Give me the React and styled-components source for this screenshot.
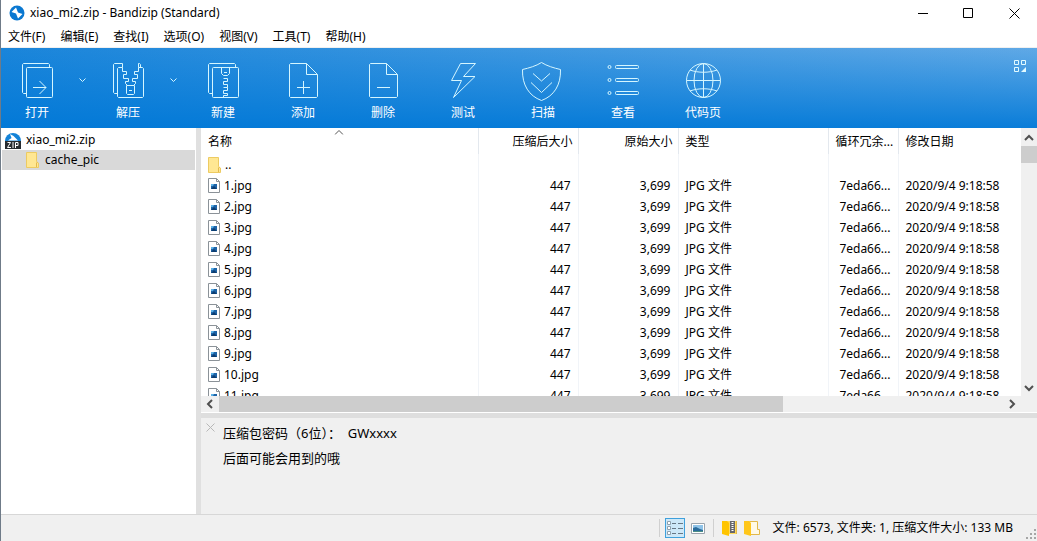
import React from 'react';
import styled, { createGlobalStyle } from 'styled-components';

const menus = ['文件(F)', '编辑(E)', '查找(I)', '选项(O)', '视图(V)', '工具(T)', '帮助(H)'];
const files = Array.from({ length: 11 }, (_, i) => `${i + 1}.jpg`);

const App = () => {
  return (
    <>
      <GlobalStyle />
      <Window>
        <TitleBar>
          <LogoIcon />
          <h1>xiao_mi2.zip - Bandizip (Standard)</h1>
          <WindowButton aria-label="最小化">
            <svg width="11" height="11" viewBox="0 0 11 11">
              <path d="M1 5.5H11" />
            </svg>
          </WindowButton>
          <WindowButton aria-label="最大化">
            <svg width="11" height="11" viewBox="0 0 11 11">
              <path d="M.5 .5H9.5V9.5H.5Z" />
            </svg>
          </WindowButton>
          <WindowButton aria-label="关闭">
            <svg width="11" height="11" viewBox="0 0 11 11">
              <path d="M.5 .5L10.5 10.5M10.5 .5L.5 10.5" />
            </svg>
          </WindowButton>
        </TitleBar>
        <MenuBar>
          {menus.map((menu) => (
            <MenuButton key={menu}>{menu}</MenuButton>
          ))}
        </MenuBar>
        <Toolbar>
          {tools.map(({ label, icon, width, menu }) => (
            <React.Fragment key={label}>
              <ToolButton $width={width}>
                <svg width="40" height="40" viewBox="0 0 40 40">
                  {icon}
                </svg>
                {label}
              </ToolButton>
              {menu && (
                <ToolArrow aria-label={`${label}菜单`}>
                  <svg width="7" height="4" viewBox="0 0 7 4">
                    <path d="M.5 .5L3.5 3.5L6.5 .5" />
                  </svg>
                </ToolArrow>
              )}
            </React.Fragment>
          ))}
          <LayoutButton aria-label="布局">
            <svg width="13" height="13" viewBox="0 0 13 13">
              <path d="M.5 .5H4.5V4.5H.5ZM7.5 .5H11.5V4.5H7.5ZM.5 7.5H4.5V11.5H.5Z" />
              <path d="M12 7V12H7Z" fill="#e3fbff" stroke="none" />
            </svg>
          </LayoutButton>
        </Toolbar>
        <Body>
          <Tree>
            <TreeItem>
              <ZipIcon />
              xiao_mi2.zip
            </TreeItem>
            <TreeItem $selected $nested>
              <FolderIcon />
              cache_pic
            </TreeItem>
          </Tree>
          <Content>
            <ListPane>
              <ListView>
                <FileTable>
                  <colgroup>
                    <Col $width={277} />
                    <Col $width={100} />
                    <Col $width={100} />
                    <Col $width={150} />
                    <Col $width={70} />
                    <Col />
                  </colgroup>
                  <thead>
                    <tr>
                      <HeadCell>
                        名称
                        <SortMark width="9" height="5" viewBox="0 0 9 5">
                          <path d="M.5 4.5L4.5 .5L8.5 4.5" />
                        </SortMark>
                      </HeadCell>
                      <HeadCell $right>压缩后大小</HeadCell>
                      <HeadCell $right>原始大小</HeadCell>
                      <HeadCell>类型</HeadCell>
                      <HeadCell>循环冗余...</HeadCell>
                      <HeadCell>修改日期</HeadCell>
                    </tr>
                  </thead>
                  <tbody>
                    <tr>
                      <Cell>
                        <FileName>
                          <FolderIcon />
                          ..
                        </FileName>
                      </Cell>
                      <Cell />
                      <Cell />
                      <Cell />
                      <Cell />
                      <Cell />
                    </tr>
                    {files.map((name) => (
                      <tr key={name}>
                        <Cell>
                          <FileName>
                            <ImageIcon />
                            {name}
                          </FileName>
                        </Cell>
                        <Cell $right>447</Cell>
                        <Cell $right>3,699</Cell>
                        <Cell>JPG 文件</Cell>
                        <Cell $right>7eda66...</Cell>
                        <Cell>2020/9/4 9:18:58</Cell>
                      </tr>
                    ))}
                  </tbody>
                </FileTable>
              </ListView>
              <ScrollBar $vertical>
                <ScrollButton $vertical aria-label="向上滚动">
                  <Chevron d="M1 8L5 4L9 8" />
                </ScrollButton>
                <ScrollTrack $vertical>
                  <ScrollThumb $vertical />
                </ScrollTrack>
                <ScrollButton $vertical aria-label="向下滚动">
                  <Chevron d="M1 4L5 8L9 4" />
                </ScrollButton>
              </ScrollBar>
              <ScrollBar>
                <ScrollButton aria-label="向左滚动">
                  <Chevron d="M7 1L3 5L7 9" />
                </ScrollButton>
                <ScrollTrack>
                  <ScrollThumb />
                </ScrollTrack>
                <ScrollButton aria-label="向右滚动">
                  <Chevron d="M3 1L7 5L3 9" />
                </ScrollButton>
              </ScrollBar>
              <ScrollCorner />
            </ListPane>
            <Comment>
              <CloseButton aria-label="关闭注释">
                <svg width="9" height="9" viewBox="0 0 9 9">
                  <path d="M.5 .5L8.5 8.5M8.5 .5L.5 8.5" />
                </svg>
              </CloseButton>
              <div>
                <p>压缩包密码（6位）：&nbsp; GWxxxx</p>
                <p>后面可能会用到的哦</p>
              </div>
            </Comment>
          </Content>
        </Body>
        <StatusBar>
          <Separator />
          <ViewButton $active aria-label="详细信息">
            <svg width="16" height="14" viewBox="0 0 16 14">
              <path d="M.5 .5H3.5V3.5H.5ZM.5 5.5H3.5V8.5H.5ZM.5 10.5H3.5V13.5H.5Z" fill="#fff" stroke="#8fa0ad" />
              <path d="M5 2.500H9M11 2.500H16M5 7.500H9M11 7.500H16M5 12.500H9M11 12.500H16" stroke="#667785" />
            </svg>
          </ViewButton>
          <ViewButton aria-label="大图标">
            <svg width="14" height="11" viewBox="0 0 14 11">
              <path d="M.5 .5H13.5V10.5H.5Z" fill="#fff" stroke="#9aa4ad" />
              <path d="M2 2H12V9H2Z" fill="#8fc3e8" />
              <path d="M2 5L5 4L9 6L12 7V9H2Z" fill="#2a6c9c" />
              <path d="M2 8H12V9H2Z" fill="#4e8f86" />
            </svg>
          </ViewButton>
          <Separator />
          <ViewButton aria-label="压缩文件">
            <svg width="16" height="16" viewBox="0 0 16 16">
              <path d="M1 1H15V14H1Z" fill="#ffd95a" />
              <path d="M1 1H6L8 3V16L1 14Z" fill="#ffc400" />
              <path d="M9 1H14V13H9Z" fill="#68686c" />
              <path d="M11.5 2V12" stroke="#fff" strokeDasharray="1 1" strokeWidth="2" />
              <path d="M15.5 1V14" stroke="#e2b84a" />
            </svg>
          </ViewButton>
          <ViewButton aria-label="文件夹">
            <svg width="16" height="16" viewBox="0 0 16 16">
              <path d="M5.5 1.5H13.5V9.5H15.5V14.5H5.5Z" fill="#fff9e6" stroke="#e2b84a" />
              <path d="M0 1H5L7 3V16L0 14Z" fill="#ffc61a" />
            </svg>
          </ViewButton>
          <span>文件: 6573, 文件夹: 1, 压缩文件大小: 133 MB</span>
          <svg width="10" height="10" viewBox="0 0 10 10" fill="#a6a6a6">
            <path d="M8 0H10V2H8ZM8 4H10V6H8ZM4 4H6V6H4ZM8 8H10V10H8ZM4 8H6V10H4ZM0 8H2V10H0Z" />
          </svg>
        </StatusBar>
      </Window>
    </>
  );
};

const LogoIcon = () => (
  <svg width="16" height="16" viewBox="0 0 16 16">
    <circle cx="8" cy="8" r="7.5" fill="#0a78d1" />
    <path d="M7 2.5L2.5 7L7 8.5L9 13.5L13.5 9L9 7.5Z" fill="#fff" />
  </svg>
);

const ZipIcon = () => (
  <svg width="16" height="17" viewBox="0 0 16 17">
    <path d="M0 9A8 8 0 0 1 16 9Z" fill="#1483d8" />
    <path d="M5 2L8.5 4L13 8.5H3L6.5 6Z" fill="#fff" />
    <rect y="9" width="16" height="8" fill="#262b30" />
    <path d="M2.5 10.5H5.5L2.5 15.5H6M8 10V16M10.5 16V10.5H13V13.5H10.5" fill="none" stroke="#fff" />
  </svg>
);

const FolderIcon = () => (
  <svg width="13" height="16" viewBox="0 0 13 16">
    <path d="M.5 .5H10.5V9.5L12.5 11V15.5H.5Z" fill="#ffe793" stroke="#edcb62" />
    <path d="M10.5 15V11L11.5 10" fill="none" stroke="#e3b94d" />
  </svg>
);

const ImageIcon = () => (
  <svg width="12" height="15" viewBox="0 0 12 15">
    <path d="M.5 .5H8.5L11.5 3.5V14.5H.5Z" fill="#fff" stroke="#8b9298" />
    <path d="M8.5 .5V3.5H11.5" fill="none" stroke="#8b9298" />
    <path d="M3 6H9V11H3Z" fill="#1d64a8" />
    <path d="M3 6H6L5 8H3Z" fill="#5cb1e6" />
    <path d="M3 11L6 8L9 11Z" fill="#0d3d70" />
  </svg>
);

const Chevron = ({ d }) => (
  <svg width="10" height="10" viewBox="0 0 10 10">
    <path d={d} />
  </svg>
);

const pages = 'M9.5 32.5H6.5L5.5 31.5V3.5L6.5 2.5H31.5L32.5 3.5V6.5';
const sheet =
  'M23.5 2.5H7.5L6.5 3.5V35.5L7.5 36.5H33.5L34.5 35.5V13.5L23.5 2.5V13.5H34.5';

const tools = [
  {
    label: '打开',
    width: 72,
    menu: true,
    icon: (
      <>
        <path d={pages} />
        <rect x="9.5" y="6.5" width="26" height="30" rx="1" />
        <path d="M16 26.5H29M22.5 20L29 26.5L22.5 33" />
      </>
    ),
  },
  {
    label: '解压',
    width: 72,
    menu: true,
    icon: (
      <>
        <path d="M9.5 32.5H6.5L5.5 31.5V3.5L6.5 2.5H14.5V6.5" />
        <path d="M32.5 6.5V3.5L31.5 2.5H30.5V6.5" />
        <path d="M14.5 6.5H10.5L9.5 7.5V35.5L10.5 36.5H34.5L35.5 35.5V7.5L34.5 6.5H30.5" />
        <path d="M14.5 6.5V10.5H18.5V13.5H15.5V17.5H20.5V20.5H17.5V22.5L19.5 24.5" />
        <path d="M30.5 6.5V10.5H26.5V13.5H29.5V17.5H24.5V20.5H27.5V22.5L25.5 24.5" />
        <path d="M18.5 24.5H26.5V32.5L25.5 33.5H19.5L18.5 32.5ZM21 29.5H24" />
      </>
    ),
  },
  {
    label: '新建',
    width: 80,
    icon: (
      <>
        <path d={pages} />
        <rect x="9.5" y="6.5" width="26" height="30" rx="1" />
        <path d="M18.5 6.5V12.5L20.5 14.5H24.5L26.5 12.5V6.5M21 11.5H24" />
        <path d="M20.5 17.5H24.5V20.5H20.5V23.5H24.5V26.5H20.5M24.5 26.5V29.5H20.5V32.5H24.5V34.5H20.5V36.5" />
      </>
    ),
  },
  {
    label: '添加',
    width: 80,
    icon: (
      <>
        <path d={sheet} />
        <path d="M14 26.5H27M20.5 20V33" />
      </>
    ),
  },
  {
    label: '删除',
    width: 80,
    icon: (
      <>
        <path d={sheet} />
        <path d="M14 26.5H27" />
      </>
    ),
  },
  {
    label: '测试',
    width: 80,
    icon: <path d="M17.5 2.5H32.5L20.5 15.5H32L10.5 36.5L18.5 19.5H8.5Z" />,
  },
  {
    label: '扫描',
    width: 80,
    icon: (
      <>
        <path d="M18.5 1.5C13 5 6 7 -.5 8.5C-1 24 6 35 18.5 39.5C31 35 38 24 37.5 8.5C31 7 24 5 18.5 1.5Z" />
        <path d="M10 12.5L18.5 20L27 12.5M8 21.5L18.5 31.5L29 21.5" />
      </>
    ),
  },
  {
    label: '查看',
    width: 80,
    icon: (
      <>
        <circle cx="6.5" cy="6" r="1.5" />
        <circle cx="6.5" cy="19" r="1.5" />
        <circle cx="6.5" cy="32" r="1.5" />
        <rect x="12.5" y="4.5" width="23" height="3" rx="1" />
        <rect x="12.5" y="17.5" width="23" height="3" rx="1" />
        <rect x="12.5" y="30.5" width="23" height="3" rx="1" />
      </>
    ),
  },
  {
    label: '代码页',
    width: 80,
    icon: (
      <>
        <circle cx="20.5" cy="19.5" r="17" />
        <ellipse cx="20.5" cy="19.5" rx="9.500" ry="17" />
        <path d="M20.5 2.5V36.5M3.5 19.5H37.5M7 9C15 12 26 12 34 9M7 30C15 27 26 27 34 30" />
      </>
    ),
  },
];

const GlobalStyle = createGlobalStyle`
  * {
    box-sizing: border-box;
  }
  body {
    margin: 0;
    font: 12px/20px 'Noto Sans', 'Noto Sans CJK SC', sans-serif;
    color: #000;
  }
  h1, p {
    margin: 0;
    font-size: inherit;
    font-weight: 400;
  }
  button {
    padding: 0;
    border: 0;
    background: none;
    font: inherit;
    color: inherit;
  }
  svg {
    display: block;
    flex: none;
  }
`;

const Window = styled.div`
  display: flex;
  flex-direction: column;
  height: 100vh;
  border-left: 1px solid #6f7b88;
  background: #fff;
  overflow: hidden;
`;

const TitleBar = styled.header`
  display: flex;
  align-items: center;
  height: 26px;
  padding-left: 8px;
  h1 {
    flex: 1;
    margin-left: 5px;
  }
`;

const WindowButton = styled.button`
  display: flex;
  align-items: center;
  justify-content: center;
  width: 46px;
  height: 24px;
  svg {
    fill: none;
    stroke: #000;
  }
`;

const MenuBar = styled.nav`
  display: flex;
  align-items: flex-end;
  height: 22px;
  padding-left: 7px;
  gap: 15px;
  border-bottom: 1px solid #f0f0f0;
`;

const MenuButton = styled.button`
  height: 20px;
`;

const Toolbar = styled.div`
  display: flex;
  height: 80px;
  background:
    linear-gradient(to bottom, rgba(0, 120, 215, 0), rgba(0, 120, 215, 0.9)),
    linear-gradient(to right, #1a85da, #60a9e6);
`;

const ToolButton = styled.button`
  display: flex;
  flex-direction: column;
  align-items: center;
  width: ${({ $width }) => $width}px;
  padding-top: 13px;
  color: #fff;
  svg {
    margin-bottom: 2px;
    overflow: visible;
    fill: none;
    stroke: #d5f6ff;
  }
`;

const ToolArrow = styled.button`
  display: flex;
  justify-content: center;
  width: 19px;
  padding-top: 30px;
  svg {
    fill: none;
    stroke: #d5f6ff;
  }
`;

const LayoutButton = styled.button`
  align-self: flex-start;
  margin: 12px 10px 0 auto;
  svg {
    fill: none;
    stroke: #e3fbff;
  }
`;

const Body = styled.div`
  display: flex;
  flex: 1;
  min-height: 0;
`;

const Tree = styled.aside`
  width: 200px;
  padding-top: 2px;
  border-right: 5px solid #e0e0e0;
`;

const TreeItem = styled.div`
  display: flex;
  align-items: center;
  gap: ${({ $nested }) => ($nested ? 6 : 5)}px;
  height: 20px;
  margin: 0 1px;
  padding-left: ${({ $nested }) => ($nested ? 24 : 3)}px;
  background: ${({ $selected }) => ($selected ? '#d9d9d9' : 'none')};
`;

const Content = styled.main`
  display: flex;
  flex: 1;
  flex-direction: column;
  min-width: 0;
`;

const ListPane = styled.section`
  display: grid;
  flex: 1;
  grid-template-columns: minmax(0, 1fr) 16px;
  grid-template-rows: minmax(0, 1fr) 16px;
  min-height: 0;
  border-bottom: 1px solid #fff;
`;

const ListView = styled.div`
  overflow: hidden;
`;

const FileTable = styled.table`
  width: 100%;
  table-layout: fixed;
  border-collapse: collapse;
`;

const Col = styled.col`
  width: ${({ $width }) => ($width ? `${$width}px` : 'auto')};
`;

const HeadCell = styled.th`
  position: relative;
  height: 26px;
  padding: 2px 5px 0 7px;
  border-right: 1px solid #e3e8ee;
  font-weight: 400;
  white-space: nowrap;
  text-align: ${({ $right }) => ($right ? 'right' : 'left')};
  &:last-child {
    border-right: 0;
  }
`;

const SortMark = styled.svg`
  position: absolute;
  top: 2px;
  left: 50%;
  transform: translateX(-50%);
  fill: none;
  stroke: #555;
`;

const Cell = styled.td`
  height: 21px;
  padding: 0 7px;
  border-right: 1px solid #f1f4f8;
  white-space: nowrap;
  text-align: ${({ $right }) => ($right ? 'right' : 'left')};
  &:last-child {
    border-right: 0;
  }
`;

const FileName = styled.div`
  display: flex;
  align-items: center;
  gap: 4px;
`;

const ScrollBar = styled.div`
  display: flex;
  flex-direction: ${({ $vertical }) => ($vertical ? 'column' : 'row')};
  background: #f0f0f0;
`;

const ScrollButton = styled.button`
  display: flex;
  align-items: center;
  justify-content: center;
  width: ${({ $vertical }) => ($vertical ? 16 : 18)}px;
  height: ${({ $vertical }) => ($vertical ? 18 : 16)}px;
  svg {
    fill: none;
    stroke: #505050;
    stroke-width: 2;
  }
`;

const ScrollTrack = styled.div`
  flex: 1;
`;

const ScrollThumb = styled.div`
  width: ${({ $vertical }) => ($vertical ? '100%' : '72%')};
  height: ${({ $vertical }) => ($vertical ? '17px' : '100%')};
  background: #cdcdcd;
`;

const ScrollCorner = styled.div`
  background: #f0f0f0;
`;

const Comment = styled.section`
  display: flex;
  gap: 8px;
  height: 101px;
  padding: 3px 5px;
  border-top: 5px solid #dedede;
  background: #f0f0f0;
  font-size: 13px;
  line-height: 25px;
`;

const CloseButton = styled.button`
  align-self: flex-start;
  padding-top: 2px;
  svg {
    fill: none;
    stroke: #b8b8b8;
  }
`;

const StatusBar = styled.footer`
  display: flex;
  align-items: center;
  justify-content: flex-end;
  gap: 3px;
  height: 27px;
  padding-right: 1px;
  border-top: 1px solid #d7d7d7;
  background: #f0f0f0;
  span {
    margin: 0 10px 0 8px;
  }
  > svg {
    align-self: flex-end;
    margin-bottom: 2px;
  }
`;

const Separator = styled.div`
  width: 1px;
  height: 18px;
  margin: 0 2px;
  background: #d0d0d0;
`;

const ViewButton = styled.button`
  display: flex;
  align-items: center;
  justify-content: center;
  width: 20px;
  height: 20px;
  border: 1px solid ${({ $active }) => ($active ? '#3fa0dc' : 'transparent')};
  background: ${({ $active }) => ($active ? '#cde8f8' : 'none')};
  svg {
    fill: none;
  }
`;

export default App;
